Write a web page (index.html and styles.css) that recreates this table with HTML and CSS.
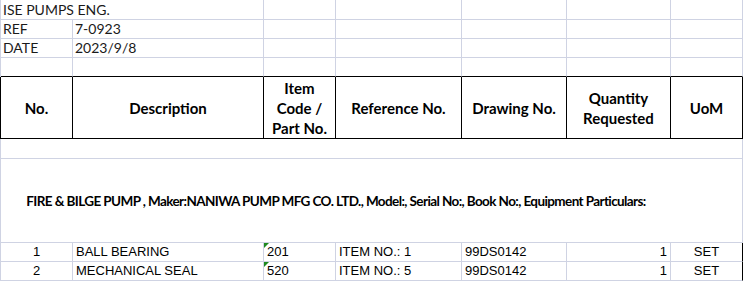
FILE: index.html
```html
<!DOCTYPE html>
<html>
<head>
<meta charset="utf-8">
<link rel="stylesheet" href="styles.css">
</head>
<body>
<div class="sheet">
  <div class="row top r1">
    <div class="cell span2 info">ISE PUMPS ENG.</div>
    <div class="cell"></div><div class="cell"></div><div class="cell"></div><div class="cell"></div><div class="cell"></div>
  </div>
  <div class="row top">
    <div class="cell info">REF</div>
    <div class="cell info">7-0923</div>
    <div class="cell"></div><div class="cell"></div><div class="cell"></div><div class="cell"></div><div class="cell"></div>
  </div>
  <div class="row top">
    <div class="cell info">DATE</div>
    <div class="cell info">2023/9/8</div>
    <div class="cell"></div><div class="cell"></div><div class="cell"></div><div class="cell"></div><div class="cell"></div>
  </div>
  <div class="row top r4">
    <div class="cell"></div><div class="cell"></div><div class="cell"></div><div class="cell"></div><div class="cell"></div><div class="cell"></div><div class="cell"></div>
  </div>
  <div class="row head">
    <div class="cell">No.</div>
    <div class="cell">Description</div>
    <div class="cell">Item<br>Code /<br>Part No.</div>
    <div class="cell">Reference No.</div>
    <div class="cell">Drawing No.</div>
    <div class="cell">Quantity<br>Requested</div>
    <div class="cell">UoM</div>
  </div>
  <div class="row blank">
    <div class="cell span7"></div>
  </div>
  <div class="row section">
    <div class="cell span6 title">FIRE &amp; BILGE PUMP , Maker:NANIWA PUMP MFG CO. LTD., Model:, Serial No:, Book No:, Equipment Particulars:</div>
    <div class="cell"></div>
  </div>
  <div class="row data">
    <div class="cell c">1</div>
    <div class="cell">BALL BEARING</div>
    <div class="cell txtnum">201</div>
    <div class="cell">ITEM NO.: 1</div>
    <div class="cell">99DS0142</div>
    <div class="cell r">1</div>
    <div class="cell c last">SET</div>
  </div>
  <div class="row data">
    <div class="cell c">2</div>
    <div class="cell">MECHANICAL SEAL</div>
    <div class="cell txtnum">520</div>
    <div class="cell">ITEM NO.: 5</div>
    <div class="cell">99DS0142</div>
    <div class="cell r">1</div>
    <div class="cell c last">SET</div>
  </div>
</div>
</body>
</html>
```
FILE: styles.css
```css
html, body {
  margin: 0;
  padding: 0;
  background: #ffffff;
}

.sheet {
  width: 743px;
  height: 281px;
  overflow: hidden;
}

.row {
  display: grid;
  grid-template-columns: 72px 191px 72px 126px 105px 104px 72px;
  border-left: 1px solid #cfd3e3;
}

.cell {
  box-sizing: border-box;
  border-right: 1px solid #cfd3e3;
  border-bottom: 1px solid #cfd3e3;
  position: relative;
  white-space: nowrap;
}

.span2 { grid-column: span 2; }
.span6 { grid-column: span 6; }
.span7 { grid-column: span 7; }

.top .cell {
  height: 19px;
}
.top.r1 .cell {
  height: 20px;
}
.top.r4 .cell {
  border-bottom-color: #000;
}

.info {
  font-family: "Lato", "Open Sans", sans-serif;
  font-weight: 400;
  font-size: 14px;
  line-height: 18px;
  color: #1a1a1a;
  padding-left: 2px;
  display: flex;
  align-items: flex-end;
}

.head {
  border-left-color: #000;
}
.head .cell {
  height: 62px;
  border-right-color: #000;
  border-bottom-color: #000;
  display: flex;
  align-items: center;
  justify-content: center;
  text-align: center;
  font-family: "Lato", "Liberation Sans", sans-serif;
  font-weight: 700;
  font-size: 15px;
  line-height: 20px;
  color: #000;
}

.blank .cell {
  height: 20px;
}

.section .cell {
  height: 84px;
}
.title {
  border-right: none !important;
  display: flex;
  align-items: center;
  justify-content: center;
  font-family: "Lato", "Liberation Sans", sans-serif;
  font-weight: 700;
  font-size: 13.5px;
  letter-spacing: -0.6px;
  color: #000;
}

.data .cell {
  height: 19px;
  font-family: "Liberation Sans", Arial, sans-serif;
  font-size: 13px;
  line-height: 16px;
  color: #000;
  padding: 1px 3px 0 3px;
}
.data .c { text-align: center; }
.data .r { text-align: right; }
.data .last { border-right-color: #000; }

.txtnum::before {
  content: "";
  position: absolute;
  left: 0;
  top: 0;
  width: 0;
  height: 0;
  border-top: 5px solid #1f8a1f;
  border-right: 5px solid transparent;
}
```
